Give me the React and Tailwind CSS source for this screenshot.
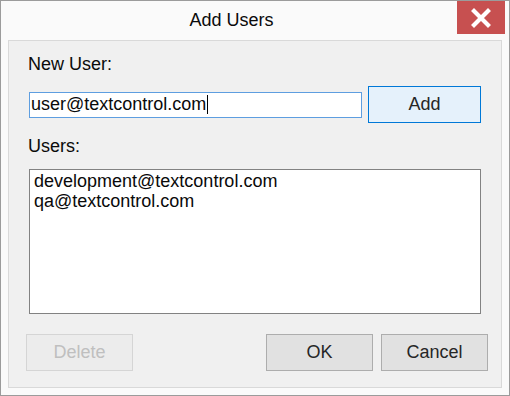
import { X } from 'lucide-react'

const font = { fontFamily: '"Liberation Sans", Arial, sans-serif' }

function DialogButton({ children, disabled, primary }) {
  const tone = disabled
    ? 'bg-[#ececec] border-[#d5d5d5] text-[#bfbfbf]'
    : primary
      ? 'bg-[#e5f1fb] border-[#0078d7] text-[#262626]'
      : 'bg-[#e1e1e1] border-[#adadad] text-[#262626]'
  return (
    <button
      type="button"
      disabled={disabled}
      className={`w-[107px] h-[37px] border text-[18px] leading-[21px] flex items-center justify-center ${tone}`}
    >
      {children}
    </button>
  )
}

export default function App() {
  return (
    <div style={font} className="w-[510px] h-[396px] border border-[#9b9b9b] bg-[#fafafa] flex flex-col text-[#0a0a0a]">
      <div className="h-[39px] flex items-start">
        <div className="flex-1 pl-[5px] pt-[9px] text-center text-[18px] leading-[21px]">Add Users</div>
        <div className="w-[48px] h-[33px] bg-[#c75050] flex items-center justify-center mr-[4px]">
          <svg width="20" height="20" viewBox="0 0 20 20">
            <path d="M3 3 L17 17 M17 3 L3 17" stroke="#fff" strokeWidth="4.2" strokeLinecap="square" />
          </svg>
        </div>
      </div>

      <div className="mx-[7px] h-[348px] border border-[#d9d9d9] bg-[#f0f0f0] flex flex-col pl-[19px]">
        <div className="mt-[13px] text-[18px] leading-[21px]">New User:</div>

        <div className="mt-[11px] flex items-center">
          <div className="ml-[1px] w-[333px] h-[26px] border border-[#5e9ee0] bg-white flex items-center pl-[1px] text-[18px] leading-[21px]">
            user@textcontrol.com
            <span className="ml-[1px] w-px h-[19px] bg-black" />
          </div>
          <div className="ml-[6px]">
            <button
              type="button"
              className="w-[113px] h-[37px] border border-[#0078d7] bg-[#e5f1fb] text-[#262626] text-[18px] leading-[21px]"
            >
              Add
            </button>
          </div>
        </div>

        <div className="mt-[13px] text-[18px] leading-[21px]">Users:</div>

        <div className="mt-[12px] ml-[1px] w-[452px] h-[145px] border border-[#828282] bg-white pt-[1px] px-[4px] text-[18px] leading-[20px]">
          <div>development@textcontrol.com</div>
          <div>qa@textcontrol.com</div>
        </div>

        <div className="mt-[20px] -ml-[2px] flex items-center">
          <DialogButton disabled>Delete</DialogButton>
          <div className="ml-auto mr-[13px] flex gap-[8px]">
            <DialogButton>OK</DialogButton>
            <DialogButton>Cancel</DialogButton>
          </div>
        </div>
      </div>
    </div>
  )
}
